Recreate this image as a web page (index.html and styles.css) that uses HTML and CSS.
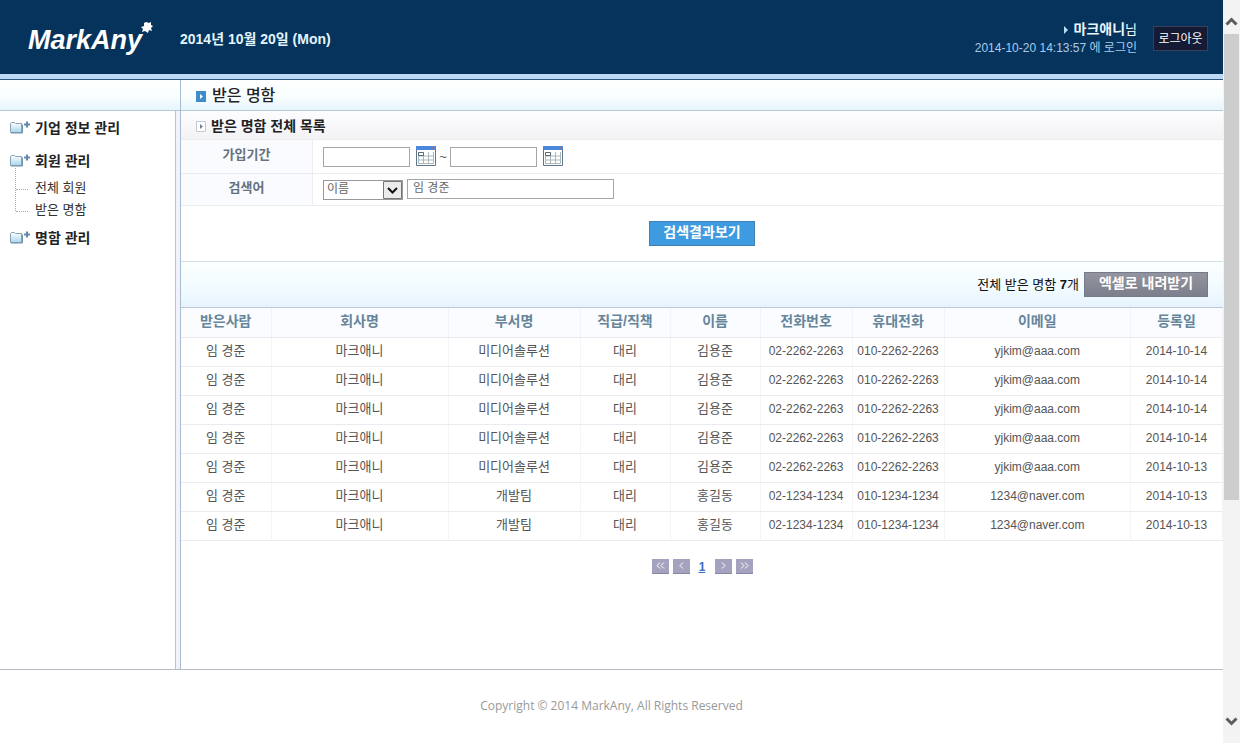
FILE: index.html
```html
<!DOCTYPE html>
<html lang="ko">
<head>
<meta charset="utf-8">
<title>받은 명함</title>
<link rel="stylesheet" href="styles.css">
</head>
<body>
<svg width="0" height="0" class="defs" aria-hidden="true">
  <defs>
    <linearGradient id="fold" x1="0" y1="0" x2="0" y2="1"><stop offset="0" stop-color="#fff"/><stop offset="1" stop-color="#a9d6ec"/></linearGradient>
    <symbol id="folder" viewBox="0 0 22 16">
      <path d="M1.500 3.500l1-1h3l1 1h6v9h-11z" fill="url(#fold)" stroke="#86a3b5"/>
      <path d="M2 13h11.500V4.500" fill="none" stroke="#6f93a8"/>
      <path d="M18 1.500v6M15 4.500h6" stroke="#6487ab" stroke-width="2"/>
    </symbol>
    <symbol id="cal" viewBox="0 0 20 20">
      <path d="M0.500 0.500h19v19h-19z" fill="#fff" stroke="#5d7489"/>
      <path d="M0 0h20v4H0z" fill="#4a86dc"/>
      <path d="M16 1h2v2h-2z" fill="#b06a78"/>
      <path d="M2.500 6v11.500h15V6M2.500 10h15M2.500 14h15M7.500 6v11.500M12.500 6v11.500" fill="none" stroke="#a9b7b9"/>
      <path d="M2.500 6.500h5v3h-5z" fill="#fff" stroke="#5b6c78"/>
    </symbol>
  </defs>
</svg>
<div class="page">
  <header class="top">
    <svg class="logo" width="130" height="44" viewBox="0 0 130 44" role="img" aria-label="MarkAny">
      <text x="0" y="32" class="logo-text">MarkAny</text>
      <path d="M118 5l3 1 2-1v3l2 1-2 2 1 3-3-1-1 3-3-2-3 1 1-3-2-2 3-1v-3z" fill="#fff"/>
    </svg>
    <strong class="today">2014년 10월 20일 (Mon)</strong>
    <div class="user">
      <p class="name"><svg width="5" height="8" viewBox="0 0 5 8"><path d="M0 0l4 4-4 4z" fill="#b8dcf5"/></svg><b>마크애니</b>님</p>
      <p class="login">2014-10-20 14:13:57 에 로그인</p>
    </div>
    <button class="logout" type="button">로그아웃</button>
  </header>
  <div class="body">
    <nav class="side">
      <div class="side-head"></div>
      <ul class="menu">
        <li><a href="#"><svg width="22" height="16"><use href="#folder"/></svg>기업 정보 관리</a></li>
        <li><a href="#"><svg width="22" height="16"><use href="#folder"/></svg>회원 관리</a>
          <ul class="sub">
            <li><a href="#">전체 회원</a></li>
            <li><a href="#">받은 명함</a></li>
          </ul>
        </li>
        <li><a href="#"><svg width="22" height="16"><use href="#folder"/></svg>명함 관리</a></li>
      </ul>
    </nav>
    <main class="content">
      <h1 class="title"><svg width="10" height="11" viewBox="0 0 10 11"><path d="M0 0h10v11H0z" fill="#3f8cca"/><path d="M4 3l3 2.500L4 8z" fill="#fff"/></svg>받은 명함</h1>
      <h2 class="subtitle"><svg width="10" height="11" viewBox="0 0 10 11"><path d="M.5.5h9v10h-9z" fill="#fff" stroke="#c3c9d2"/><path d="M4 3l3 2.500L4 8z" fill="#6f7f95"/></svg>받은 명함 전체 목록</h2>
      <form class="search">
        <div class="row">
          <label class="lab" for="from">가입기간</label>
          <div class="field">
            <input class="date" id="from" type="text">
            <button class="pick" type="button" aria-label="시작일"><svg width="20" height="20"><use href="#cal"/></svg></button>
            <span class="tilde">~</span>
            <input class="date" type="text" aria-label="종료일">
            <button class="pick" type="button" aria-label="종료일 선택"><svg width="20" height="20"><use href="#cal"/></svg></button>
          </div>
        </div>
        <div class="row row-key">
          <label class="lab" for="word">검색어</label>
          <div class="field">
            <span class="combo"><select aria-label="검색 항목"><option>이름</option></select><svg class="drop" width="19" height="18" viewBox="0 0 19 18"><path d="M.5.5h18v17H.5z" fill="#ececec" stroke="#777"/><path d="M5 7l4.500 4.500L14 7" fill="none" stroke="#111" stroke-width="2"/></svg></span>
            <input class="word" id="word" type="text" value="임 경준">
          </div>
        </div>
        <div class="go"><button class="btn-search" type="submit">검색결과보기</button></div>
      </form>
      <div class="bar"><span>전체 받은 명함 <b>7</b>개</span><button class="btn-excel" type="button">엑셀로 내려받기</button></div>
      <table class="list">
        <colgroup><col class="c-to"><col class="c-co"><col class="c-dept"><col class="c-s"><col class="c-s"><col class="c-m"><col class="c-m"><col class="c-mail"><col class="c-m"></colgroup>
        <thead><tr><th>받은사람</th><th>회사명</th><th>부서명</th><th>직급/직책</th><th>이름</th><th>전화번호</th><th>휴대전화</th><th>이메일</th><th>등록일</th></tr></thead>
        <tbody>
          <tr><td>임 경준</td><td>마크애니</td><td>미디어솔루션</td><td>대리</td><td>김용준</td><td class="n">02-2262-2263</td><td class="n">010-2262-2263</td><td class="n">yjkim@aaa.com</td><td class="n">2014-10-14</td></tr>
          <tr><td>임 경준</td><td>마크애니</td><td>미디어솔루션</td><td>대리</td><td>김용준</td><td class="n">02-2262-2263</td><td class="n">010-2262-2263</td><td class="n">yjkim@aaa.com</td><td class="n">2014-10-14</td></tr>
          <tr><td>임 경준</td><td>마크애니</td><td>미디어솔루션</td><td>대리</td><td>김용준</td><td class="n">02-2262-2263</td><td class="n">010-2262-2263</td><td class="n">yjkim@aaa.com</td><td class="n">2014-10-14</td></tr>
          <tr><td>임 경준</td><td>마크애니</td><td>미디어솔루션</td><td>대리</td><td>김용준</td><td class="n">02-2262-2263</td><td class="n">010-2262-2263</td><td class="n">yjkim@aaa.com</td><td class="n">2014-10-14</td></tr>
          <tr><td>임 경준</td><td>마크애니</td><td>미디어솔루션</td><td>대리</td><td>김용준</td><td class="n">02-2262-2263</td><td class="n">010-2262-2263</td><td class="n">yjkim@aaa.com</td><td class="n">2014-10-13</td></tr>
          <tr><td>임 경준</td><td>마크애니</td><td>개발팀</td><td>대리</td><td>홍길동</td><td class="n">02-1234-1234</td><td class="n">010-1234-1234</td><td class="n">1234@naver.com</td><td class="n">2014-10-13</td></tr>
          <tr><td>임 경준</td><td>마크애니</td><td>개발팀</td><td>대리</td><td>홍길동</td><td class="n">02-1234-1234</td><td class="n">010-1234-1234</td><td class="n">1234@naver.com</td><td class="n">2014-10-13</td></tr>
        </tbody>
      </table>
      <nav class="pager" aria-label="페이지">
        <a class="pg" href="#" aria-label="처음"><svg width="9" height="7" viewBox="0 0 9 7"><path d="M4 .5l-3 3 3 3M8 .5l-3 3 3 3"/></svg></a>
        <a class="pg" href="#" aria-label="이전"><svg width="9" height="7" viewBox="0 0 9 7"><path d="M6 .5l-3 3 3 3"/></svg></a>
        <a class="cur" href="#">1</a>
        <a class="pg" href="#" aria-label="다음"><svg width="9" height="7" viewBox="0 0 9 7"><path d="M3 .5l3 3-3 3"/></svg></a>
        <a class="pg" href="#" aria-label="마지막"><svg width="9" height="7" viewBox="0 0 9 7"><path d="M1 .5l3 3-3 3M5 .5l3 3-3 3"/></svg></a>
      </nav>
    </main>
  </div>
  <footer class="foot">Copyright © 2014 MarkAny, All Rights Reserved</footer>
</div>
<div class="scroll" aria-hidden="true">
  <div class="arrow"><svg width="13" height="9" viewBox="0 0 13 9"><path d="M1.500 7.500l5-5 5 5"/></svg></div>
  <div class="track"><div class="thumb"></div></div>
  <div class="arrow arrow-end"><svg width="13" height="9" viewBox="0 0 13 9"><path d="M1.500 1.500l5 5 5-5"/></svg></div>
</div>
</body>
</html>
```
FILE: styles.css
```css
* { box-sizing: border-box; }
body {
  margin: 0;
  min-height: 100vh;
  display: grid;
  grid-template-columns: 1fr 17px;
  font: 13px/16px "Liberation Sans", "Noto Sans CJK KR", sans-serif;
  color: #555;
  background: #fff;
}
.defs { position: absolute; }
h1, h2, p, ul { margin: 0; padding: 0; list-style: none; }
a { color: inherit; text-decoration: none; }
svg { flex: none; }
button, input, select { font: inherit; margin: 0; border-radius: 0; }
.page { display: flex; flex-direction: column; min-width: 0; }

.top {
  display: flex;
  align-items: center;
  height: 80px;
  padding: 0 15px 2px 28px;
  color: #fff;
  background: #06335c;
  border-bottom: 1px solid #2f5680;
  box-shadow: inset 0 -5px #bcd9f5;
}
.logo { margin-right: 22px; }
.logo-text { font: italic bold 27px "Liberation Sans", sans-serif; fill: #fff; }
.today { font-size: 14px; color: #e4f4fd; }
.user { margin-left: auto; margin-right: 16px; text-align: right; }
.name { line-height: 18px; }
.name svg { margin-right: 5px; }
.name b { color: #e9f7ff; font-size: 14px; }
.login { font-size: 12px; line-height: 18px; color: #a9cbea; }
.logout {
  width: 55px;
  height: 25px;
  padding: 0;
  font-size: 12px;
  color: #fff;
  background: #151a35;
  border: 1px solid #3d3f58;
}

.body { display: flex; flex: 1; border-bottom: 1px solid #b9bcc4; }
.side { width: 180px; background: #f1f2fb; display: flex; flex-direction: column; }
.side-head, .title {
  height: 31px;
  background: linear-gradient(#fff, #fafeff 50%, #e6f5fd);
  border-bottom: 1px solid #b4c8d8;
}
.menu {
  flex: 1;
  margin-right: 4px;
  padding: 7px 0 0 9px;
  background: #fff;
  border-right: 1px solid #b9c2cf;
  font-size: 14px;
  font-weight: bold;
  color: #222;
}
.menu > li { margin-bottom: 13px; }
.menu > li > a { display: flex; gap: 4px; align-items: center; height: 20px; }
.sub {
  margin: -3px 0 0 6px;
  height: 43px;
  border-left: 1px dotted #aaa;
  font-size: 13px;
  font-weight: normal;
  color: #333;
}
.menu > li:nth-child(2) { margin-bottom: 17px; }
.sub li { height: 22px; display: flex; align-items: flex-end; }
.sub li::before { content: ""; width: 12px; margin-right: 7px; border-bottom: 1px dotted #aaa; }
.sub a { line-height: 16px; margin-bottom: -6px; }

.content { flex: 1; min-width: 0; border-left: 1px solid #a9bdd2; }
.title, .subtitle { display: flex; align-items: center; padding: 0 15px; color: #222; }
.title { font-size: 16px; font-weight: 500; gap: 6px; padding-top: 2px; }
.subtitle {
  height: 29px;
  gap: 5px;
  font-size: 14px;
  font-weight: bold;
  background: linear-gradient(#fdfdff, #f3f3f5);
  border-bottom: 1px solid #ececee;
  padding-top: 2px;
}
.row { display: flex; height: 34px; border-bottom: 1px solid #ececf0; }
.row-key { height: 32px; }
.lab {
  width: 132px;
  padding-bottom: 3px;
  display: flex;
  align-items: center;
  justify-content: center;
  font-weight: bold;
  color: #66717c;
  background: #fafbfe;
  border-right: 1px solid #ececf2;
}
.field { display: flex; align-items: center; padding-left: 10px; }
.date, .word { height: 20px; border: 1px solid #a6a6a6; padding: 0 5px 4px; font-size: 12px; color: #666; background: #fff; }
.date { width: 87px; }
.word { width: 207px; margin-bottom: 2px; }
.pick { width: 20px; height: 20px; margin: 0 0 2px 6px; padding: 0; border: 0; background: none; display: block; }
.tilde { width: 14px; text-align: center; }
.combo { display: grid; width: 80px; height: 20px; margin-right: 4px; }
.combo select, .combo .drop { grid-area: 1 / 1; }
.combo select { width: 80px; height: 20px; padding: 0 3px 2px; appearance: none; border: 1px solid #999; background: #fff; color: #666; font-size: 12px; }
.drop { justify-self: end; align-self: center; margin-right: 1px; pointer-events: none; }
.go { display: flex; justify-content: center; align-items: center; height: 56px; border-bottom: 1px solid #d3e0e8; }
.btn-search, .btn-excel { height: 25px; padding: 0 0 4px; color: #fff; font-size: 14px; font-weight: bold; }
.btn-search { width: 106px; background: #3f9be0; border: 1px solid #4180b5; }
.btn-excel { width: 124px; background: linear-gradient(#93949f, #7c7f8c); border: 1px solid #757a88; }
.bar {
  display: flex;
  align-items: center;
  justify-content: flex-end;
  gap: 5px;
  height: 46px;
  padding-right: 15px;
  background: linear-gradient(#fcffff, #f1fbff 60%, #e6f3fd);
  border-bottom: 1px solid #bccbd6;
  color: #111;
}
.list { width: 100%; table-layout: fixed; border-collapse: collapse; }
.c-to { width: 90px; } .c-co { width: 17%; } .c-dept { width: 132px; } .c-s { width: 90px; } .c-m { width: 92px; }
.list th, .list td { height: 29px; padding: 0 0 2px; text-align: center; white-space: nowrap; border-right: 1px solid #f3f4f8; border-bottom: 1px solid #ebebef; }
.list th { font-size: 14px; color: #66859a; background: #fafcff; }
.list .n { font-size: 12px; }
.pager { display: flex; justify-content: center; gap: 4px; margin-top: 18px; }
.pg { width: 17px; height: 15px; display: flex; align-items: center; justify-content: center; background: #a3a3c0; border-bottom: 1px solid #8585a6; }
.pg path { fill: none; stroke: #fff; stroke-width: 1; }
.cur { width: 17px; text-align: center; color: #3c6cc4; font-size: 12px; font-weight: bold; text-decoration: underline; }
.foot { height: 73px; display: flex; align-items: center; justify-content: center; padding-bottom: 2px; font: 12px/16px "Open Sans", sans-serif; color: #999; }

.scroll { display: flex; flex-direction: column; background: #f3f3f3; }
.arrow { height: 34px; padding-top: 17px; display: flex; justify-content: center; }
.arrow-end { padding-top: 8px; }
.arrow path { fill: none; stroke: #5c5c5c; stroke-width: 3; }
.track { flex: 1; }
.thumb { height: 69%; margin: 0 1px; background: #cdcdcd; }
```
